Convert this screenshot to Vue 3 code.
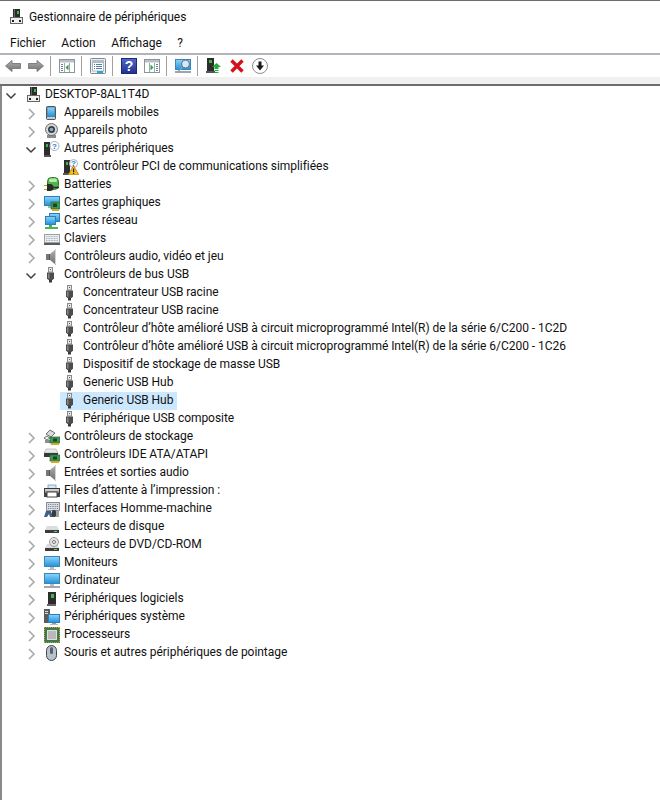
<script setup>
const menus = ['Fichier', 'Action', 'Affichage', '?']
const tools = ['back', 'fwd', '|', 't-hide', '|', 't-props', '|', 't-help', 't-panel', '|', 't-scan', '|', 't-update', 't-x', 't-down']
const rows = [
  { l: 0, t: 'DESKTOP-8AL1T4D', i: 'root', s: 'open' },
  { l: 1, t: 'Appareils mobiles', i: 'mobile', s: 'closed' },
  { l: 1, t: 'Appareils photo', i: 'camera', s: 'closed' },
  { l: 1, t: 'Autres périphériques', i: 'other', s: 'open' },
  { l: 2, t: 'Contrôleur PCI de communications simplifiées', i: 'warn' },
  { l: 1, t: 'Batteries', i: 'battery', s: 'closed' },
  { l: 1, t: 'Cartes graphiques', i: 'gpu', s: 'closed' },
  { l: 1, t: 'Cartes réseau', i: 'net', s: 'closed' },
  { l: 1, t: 'Claviers', i: 'keyboard', s: 'closed' },
  { l: 1, t: 'Contrôleurs audio, vidéo et jeu', i: 'audio', s: 'closed' },
  { l: 1, t: 'Contrôleurs de bus USB', i: 'usb', s: 'open' },
  { l: 2, t: 'Concentrateur USB racine', i: 'usb' },
  { l: 2, t: 'Concentrateur USB racine', i: 'usb' },
  { l: 2, t: 'Contrôleur d’hôte amélioré USB à circuit microprogrammé Intel(R) de la série 6/C200 - 1C2D', i: 'usb' },
  { l: 2, t: 'Contrôleur d’hôte amélioré USB à circuit microprogrammé Intel(R) de la série 6/C200 - 1C26', i: 'usb' },
  { l: 2, t: 'Dispositif de stockage de masse USB', i: 'usb' },
  { l: 2, t: 'Generic USB Hub', i: 'usb' },
  { l: 2, t: 'Generic USB Hub', i: 'usb', sel: true },
  { l: 2, t: 'Périphérique USB composite', i: 'usb' },
  { l: 1, t: 'Contrôleurs de stockage', i: 'storage', s: 'closed' },
  { l: 1, t: 'Contrôleurs IDE ATA/ATAPI', i: 'ide', s: 'closed' },
  { l: 1, t: 'Entrées et sorties audio', i: 'audio', s: 'closed' },
  { l: 1, t: 'Files d’attente à l’impression :', i: 'print', s: 'closed' },
  { l: 1, t: 'Interfaces Homme-machine', i: 'hid', s: 'closed' },
  { l: 1, t: 'Lecteurs de disque', i: 'disk', s: 'closed' },
  { l: 1, t: 'Lecteurs de DVD/CD-ROM', i: 'dvd', s: 'closed' },
  { l: 1, t: 'Moniteurs', i: 'monitor', s: 'closed' },
  { l: 1, t: 'Ordinateur', i: 'computer', s: 'closed' },
  { l: 1, t: 'Périphériques logiciels', i: 'soft', s: 'closed' },
  { l: 1, t: 'Périphériques système', i: 'sys', s: 'closed' },
  { l: 1, t: 'Processeurs', i: 'cpu', s: 'closed' },
  { l: 1, t: 'Souris et autres périphériques de pointage', i: 'mouse', s: 'closed' },
]
</script>

<template>
  <div class="win">
    <svg class="defs" aria-hidden="true">
      <defs>
        <linearGradient id="blue" x1="0" y1="0" x2="0" y2="1"><stop offset="0" stop-color="#8fd4f7"/><stop offset="1" stop-color="#1f93de"/></linearGradient>
        <linearGradient id="grayg" x1="0" y1="0" x2="0" y2="1"><stop offset="0" stop-color="#b0b0b0"/><stop offset="1" stop-color="#6e6e6e"/></linearGradient>
        <linearGradient id="help" x1="0" y1="0" x2="0" y2="1"><stop offset="0" stop-color="#5468c8"/><stop offset="1" stop-color="#1f2f8f"/></linearGradient>
      </defs>
      <symbol id="root" viewBox="0 0 16 16">
        <rect x="4" y="0" width="7" height="8" fill="#2b2b2b"/><rect x="8" y="2" width="2" height="3" fill="#3fb54a"/><rect x="5" y="0" width="1" height="8" fill="#666"/>
        <rect x="1.500" y="8.500" width="12" height="6" fill="#efefef" stroke="#666"/><rect x="3" y="11" width="2" height="2" fill="#222"/><rect x="10" y="11" width="2" height="2" fill="#222"/>
      </symbol>
      <symbol id="mobile" viewBox="0 0 16 16">
        <rect x="2.500" y="1.500" width="9" height="13" rx="1" fill="#6f7a84" stroke="#4d5761"/><rect x="3.500" y="2.500" width="7" height="9" fill="url(#blue)"/><rect x="3" y="12" width="8" height="2" fill="#c8ccd0"/>
      </symbol>
      <symbol id="camera" viewBox="0 0 16 16">
        <rect x="3" y="12" width="9" height="3" fill="#8c8c8c"/><rect x="6" y="10" width="3" height="3" fill="#666"/>
        <circle cx="7.500" cy="6.500" r="6" fill="#d6d6d6" stroke="#6e6e6e"/><circle cx="7.500" cy="6.500" r="3.500" fill="#3a3f44"/><circle cx="7.500" cy="6.500" r="1.800" fill="#7bb0d6"/>
      </symbol>
      <symbol id="other" viewBox="0 0 16 16">
        <rect x="0" y="1" width="6" height="13" fill="#2d2d2d"/><rect x="2" y="3" width="2" height="3" fill="#3fb54a"/><rect x="0" y="14" width="7" height="2" fill="#555"/>
        <circle cx="10.500" cy="5" r="4.500" fill="#fff" stroke="#9fb0c2"/>
      </symbol>
      <symbol id="warn" viewBox="0 0 16 16">
        <rect x="1" y="1" width="6" height="13" fill="#2d2d2d"/><rect x="3" y="3" width="2" height="3" fill="#3fb54a"/><rect x="0" y="14" width="8" height="2" fill="#555"/>
        <circle cx="10.500" cy="4.500" r="4" fill="#fff" stroke="#a9b4c0"/>
        <path d="M10.500 6.500L16 16H5z" fill="#f4b91f" stroke="#8a6a10" stroke-width=".6"/><rect x="10" y="9.500" width="1.200" height="3.500" fill="#222"/><rect x="10" y="13.700" width="1.200" height="1.200" fill="#222"/>
      </symbol>
      <symbol id="battery" viewBox="0 0 16 16">
        <rect x="3.500" y="0.500" width="11" height="12" rx="4" fill="#4fb648" stroke="#2c7a2c"/><rect x="5" y="1.500" width="8" height="3.500" rx="1.500" fill="#b5e8ac"/>
        <path d="M0 8.500h3M0 12.500h3" stroke="#c9a11e" stroke-width="1.200"/><path d="M3 7h3a3.500 3.500 0 010 7H3z" fill="#2a2a2a"/><path d="M9 10.500h6" stroke="#2a2a2a" stroke-width="1.500"/>
      </symbol>
      <symbol id="gpu" viewBox="0 0 16 16">
        <rect x="0.500" y="1.500" width="15" height="9" fill="url(#blue)" stroke="#2c7fb8"/><rect x="4" y="11" width="4" height="2" fill="#b0b0b0"/>
        <rect x="7" y="7" width="9" height="7" fill="#3f9a55" stroke="#1f6b36" stroke-width=".7"/><rect x="9" y="8.500" width="4" height="3.500" fill="#1d4426"/><rect x="8" y="14" width="7" height="2" fill="#d6a826"/>
      </symbol>
      <symbol id="net" viewBox="0 0 16 16">
        <rect x="5.500" y="0.500" width="10" height="8" fill="url(#blue)" stroke="#2c7fb8"/><rect x="1.500" y="3.500" width="10" height="8" fill="url(#blue)" stroke="#2c7fb8"/>
        <rect x="5" y="12" width="3" height="2" fill="#3fb54a"/><rect x="1" y="14" width="13" height="2" fill="#47b552"/>
      </symbol>
      <symbol id="keyboard" viewBox="0 0 16 16">
        <rect x="0.500" y="3.500" width="15" height="8" fill="#eceff2" stroke="#9aa1a9"/><path d="M2 5.500h12M2 7.500h12M2 9.500h12" stroke="#a9b0b8" stroke-dasharray="1 .6"/><rect x="0" y="12" width="16" height="2" fill="#5c5c5c"/>
      </symbol>
      <symbol id="audio" viewBox="0 0 16 16">
        <rect x="2" y="5" width="4" height="6" fill="#777"/><path d="M6 5L12 0V16L6 11z" fill="url(#grayg)"/><path d="M11.500 0.500V15.500" stroke="#d5d5d5"/><rect x="5" y="5" width="1" height="6" fill="#555"/>
      </symbol>
      <symbol id="usb" viewBox="0 0 16 16">
        <rect x="4.500" y="0.500" width="4" height="4.500" fill="#e7e7e7" stroke="#8a8a8a"/><rect x="6" y="2" width="1" height="1" fill="#555"/>
        <path d="M3 5.500H10V11.500L8.500 13H4.500L3 11.500z" fill="#4d4d4d"/><rect x="4" y="6.500" width="1.500" height="5" fill="#888"/><rect x="5" y="13" width="3" height="2.500" fill="#3a3a3a"/>
      </symbol>
      <symbol id="storage" viewBox="0 0 16 16">
        <path d="M2 5L6 1L11 4L7 8z" fill="#d9d9d9" stroke="#555" stroke-width=".8"/><path d="M0 9L3 7L6 9L3 11z" fill="#eee" stroke="#555" stroke-width=".8"/>
        <rect x="1" y="11" width="6" height="3" fill="#8d8d8d"/><rect x="6" y="8" width="10" height="6" fill="#3f9a55" stroke="#1f6b36" stroke-width=".7"/><rect x="9" y="9.500" width="4" height="3" fill="#1d4426"/><rect x="7" y="14" width="8" height="2" fill="#d6a826"/>
      </symbol>
      <symbol id="ide" viewBox="0 0 16 16">
        <path d="M2 2H12L14 6H0z" fill="#e8e8e8" stroke="#999" stroke-width=".5"/><rect x="0" y="6" width="14" height="4" fill="#3a3a3a"/>
        <rect x="6" y="8" width="10" height="6" fill="#3f9a55" stroke="#1f6b36" stroke-width=".7"/><rect x="9" y="9.500" width="4" height="3" fill="#1d4426"/><rect x="7" y="14" width="8" height="2" fill="#d6a826"/>
      </symbol>
      <symbol id="print" viewBox="0 0 16 16">
        <rect x="4" y="2" width="8" height="4" fill="#d9eaf6" stroke="#5a8fb5" stroke-width=".7"/><rect x="0.500" y="5.500" width="15" height="5" fill="#8f8f8f" stroke="#3a3a3a"/>
        <rect x="1" y="6" width="14" height="2" fill="#cfcfcf"/><rect x="3" y="9" width="10" height="5" fill="#fff" stroke="#444"/><rect x="0" y="11" width="3" height="3" fill="#444"/><rect x="13" y="11" width="3" height="3" fill="#444"/>
      </symbol>
      <symbol id="hid" viewBox="0 0 16 16">
        <rect x="2.500" y="1.500" width="13" height="8" fill="#d8dde2" stroke="#8a9098"/><path d="M4 3.500h10M4 5.500h10M4 7.500h10" stroke="#7d8894" stroke-dasharray="1 .8"/>
        <path d="M2 10H7L9 16H6L5 13L3 16H0z" fill="#3f5f88"/><rect x="8" y="9" width="4" height="7" rx="1.500" fill="#3a3a3a"/><rect x="12" y="10" width="3" height="6" fill="#9aa5b0"/>
      </symbol>
      <symbol id="disk" viewBox="0 0 16 16">
        <path d="M3 7H13L15 11H1z" fill="#dcdcdc"/><rect x="1" y="11" width="14" height="3" fill="#3b3b3b"/><rect x="10" y="12" width="3" height="1" fill="#5bd06a"/>
      </symbol>
      <symbol id="dvd" viewBox="0 0 16 16">
        <path d="M3 7H13L15 11H1z" fill="#dcdcdc"/><rect x="1" y="11" width="14" height="3" fill="#3b3b3b"/><rect x="10" y="12" width="3" height="1" fill="#5bd06a"/>
        <circle cx="10" cy="5" r="4.500" fill="#e3e3e3" stroke="#9a9a9a"/><circle cx="10" cy="5" r="1.500" fill="#fff" stroke="#777"/>
      </symbol>
      <symbol id="monitor" viewBox="0 0 16 16">
        <rect x="0.500" y="1.500" width="15" height="10" fill="url(#blue)" stroke="#3a86b8"/><rect x="6" y="12" width="4" height="2" fill="#b8bcc0"/><rect x="4" y="14" width="8" height="1" fill="#b8bcc0"/>
      </symbol>
      <symbol id="computer" viewBox="0 0 16 16">
        <rect x="0.500" y="0.500" width="15" height="10" fill="url(#blue)" stroke="#3a86b8"/><rect x="6" y="11" width="4" height="2" fill="#b8bcc0"/><rect x="0" y="13" width="16" height="2" fill="#a4a8ac"/>
      </symbol>
      <symbol id="soft" viewBox="0 0 16 16">
        <rect x="4" y="1" width="8" height="12" fill="#2d2d2d"/><rect x="7" y="3" width="3" height="4" fill="#3fb54a"/><rect x="3" y="13" width="9" height="2" fill="#666"/>
      </symbol>
      <symbol id="sys" viewBox="0 0 16 16">
        <rect x="0" y="0" width="6" height="14" fill="#5c5c5c"/><rect x="1" y="2" width="3" height="1" fill="#ddd"/><rect x="1" y="4" width="3" height="1" fill="#ddd"/>
        <rect x="4.500" y="5.500" width="11" height="8" fill="url(#blue)" stroke="#2c7fb8"/><rect x="8" y="14" width="4" height="1" fill="#999"/><rect x="6" y="15" width="8" height="1" fill="#bbb"/>
      </symbol>
      <symbol id="cpu" viewBox="0 0 16 16">
        <rect x="0" y="0" width="16" height="16" fill="#3f7a4e"/><path d="M0 .5h16M0 15.500h16M.5 0v16M15.500 0v16" stroke="#c89f2c" stroke-dasharray="1 1"/><rect x="3" y="3" width="10" height="10" fill="#dedede"/><rect x="4" y="4" width="8" height="8" fill="#b9b9b9"/>
      </symbol>
      <symbol id="mouse" viewBox="0 0 16 16">
        <rect x="2.500" y="0.500" width="10" height="15" rx="5" fill="#b9c2ca" stroke="#3d4650"/><rect x="6" y="2" width="3" height="7" rx="1.500" fill="#56626e"/>
      </symbol>
      <symbol id="back" viewBox="0 0 16 16"><path d="M.5 8L7 2.500V5.500H15.500V10.500H7V13.500z" fill="url(#grayg)" stroke="#808080"/></symbol>
      <symbol id="fwd" viewBox="0 0 16 16"><path d="M15.500 8L9 2.500V5.500H.5V10.500H9V13.500z" fill="url(#grayg)" stroke="#808080"/></symbol>
      <symbol id="t-hide" viewBox="0 0 16 16">
        <rect x="0.500" y="1.500" width="15" height="13" fill="#fff" stroke="#8c949c"/><rect x="1" y="2" width="14" height="2.500" fill="#b9c0c7"/><path d="M5.500 5v9M10.500 5v9" stroke="#a0a8b0"/><path d="M2 6.500h2M2 8.500h2M2 10.500h2M2 12.500h2" stroke="#6a7f95"/><path d="M9.500 6.500V12.500L6.500 9.500z" fill="#29a23f"/>
      </symbol>
      <symbol id="t-props" viewBox="0 0 16 16">
        <rect x="0.500" y="0.500" width="15" height="15" rx="1" fill="#eef1f4" stroke="#7f878f"/><rect x="2" y="2" width="12" height="2" fill="#b4bcc4"/><rect x="2.500" y="4.500" width="11" height="8.500" fill="#fff" stroke="#b0b7be"/><path d="M4 6.500h1M6 6.500h6M4 8.500h1M6 8.500h6M4 10.500h1M6 10.500h6" stroke="#5b7fa3"/><rect x="7" y="13" width="6" height="2" fill="#29a7e1"/>
      </symbol>
      <symbol id="t-help" viewBox="0 0 16 16">
        <rect x="0.500" y="0.500" width="15" height="15" fill="url(#help)" stroke="#1a2a78"/>
      </symbol>
      <symbol id="t-panel" viewBox="0 0 16 16">
        <rect x="0.500" y="1.500" width="15" height="13" fill="#fff" stroke="#8c949c"/><rect x="1" y="2" width="14" height="2.500" fill="#b9c0c7"/><path d="M5.500 5v9M10.500 5v9" stroke="#a0a8b0"/><path d="M12 6.500h2M12 8.500h2M12 10.500h2M12 12.500h2" stroke="#6a7f95"/><path d="M6.500 6.500V12.500L9.500 9.500z" fill="#29a23f"/>
      </symbol>
      <symbol id="t-scan" viewBox="0 0 16 16">
        <rect x="0.500" y="1.500" width="15" height="10" fill="url(#blue)" stroke="#3a86b8"/><rect x="0" y="13" width="16" height="2" fill="#9aa7b2"/>
        <circle cx="10.500" cy="6" r="4" fill="#cfeaf9" stroke="#5f6f7d"/><path d="M7.500 9L3.500 13" stroke="#8a97a3" stroke-width="1.500"/>
      </symbol>
      <symbol id="t-update" viewBox="0 0 16 16">
        <rect x="1" y="0" width="7" height="13" fill="#2d2d2d"/><rect x="3" y="2" width="3" height="3" fill="#3fb54a"/><rect x="0" y="13" width="9" height="2" fill="#555"/>
        <path d="M6 9L10.500 5L15 9H12.500V11H8.500V9z" fill="#1fae3a"/><rect x="8.500" y="12" width="4" height="1" fill="#1fae3a"/><rect x="8.500" y="14" width="4" height="1" fill="#1fae3a"/>
      </symbol>
      <symbol id="t-x" viewBox="0 0 16 16"><path d="M2.500 2.500L13.500 13.500M13.500 2.500L2.500 13.500" stroke="#d5121b" stroke-width="3.400"/></symbol>
      <symbol id="t-down" viewBox="0 0 16 16">
        <circle cx="8" cy="8" r="7.500" fill="#fff" stroke="#8e8e8e"/><path d="M6.500 3.500H9.500V7.500H12L8 12.500L4 7.500H6.500z" fill="#1a1a1a"/>
      </symbol>
    </svg>

    <header class="title">
      <svg class="title-icon"><use href="#root"/></svg>
      <span>Gestionnaire de périphériques</span>
    </header>

    <nav class="menu">
      <span v-for="m in menus" :key="m">{{ m }}</span>
    </nav>

    <div class="toolbar">
      <template v-for="(b, n) in tools" :key="n">
        <span v-if="b === '|'" class="sep"></span>
        <span v-else class="tool">
          <svg class="ico" viewBox="0 0 16 16">
            <use :href="'#' + b" width="16" height="16"/>
            <text v-if="b === 't-help'" x="8" y="13" class="mark-help">?</text>
          </svg>
        </span>
      </template>
    </div>
    <div class="band"></div>

    <main class="tree">
      <div v-for="(r, n) in rows" :key="n" class="row" :class="'lvl' + r.l">
        <span class="twist">
          <svg v-if="r.s === 'open'" width="12" height="12" viewBox="0 0 12 12"><path d="M1.500 3.500L6 8L10.500 3.500" fill="none" stroke="#404040" stroke-width="1.500"/></svg>
          <svg v-else-if="r.s === 'closed'" width="12" height="12" viewBox="0 0 12 12"><path d="M4 1L9 6L4 11" fill="none" stroke="#a6a6a6" stroke-width="1.500"/></svg>
        </span>
        <div class="item" :class="{ sel: r.sel }">
          <svg class="ico" viewBox="0 0 16 16">
            <use :href="'#' + r.i" width="16" height="16"/>
            <text v-if="r.i === 'other'" x="10.500" y="8" class="mark">?</text>
            <text v-if="r.i === 'warn'" x="10.500" y="7" class="mark">?</text>
          </svg>
          <span class="label">{{ r.t }}</span>
        </div>
      </div>
    </main>
  </div>
</template>

<style scoped>
.win {
  width: 660px;
  height: 800px;
  display: flex;
  flex-direction: column;
  background: #fff;
  color: #111;
  font-family: Roboto, "Noto Sans", sans-serif;
  font-size: 12px;
  overflow: hidden;
  box-sizing: border-box;
  border-top: 1px solid #6d6d6d;
}
.defs { display: block; width: 0; height: 0; }
.ico { width: 16px; height: 16px; display: block; flex: none; }
.mark { font: 700 8px "Liberation Sans", sans-serif; text-anchor: middle; fill: #2e7cc6; }
.mark-help { font: 700 14px "Liberation Sans", sans-serif; text-anchor: middle; fill: #fff; }
.title {
  height: 31px;
  display: flex;
  align-items: center;
  gap: 4px;
  padding-left: 9px;
  letter-spacing: -0.07px;
}
.title-icon { width: 16px; height: 16px; display: block; }
.menu {
  height: 21px;
  display: flex;
  align-items: center;
  gap: 15.500px;
  padding-left: 10px;
  border-bottom: 2px solid #b4b4bc;
  flex: none;
}
.toolbar {
  height: 22px;
  display: flex;
  align-items: center;
  padding-left: 1px;
  flex: none;
}
.tool { width: 23px; display: flex; justify-content: center; }
.sep { width: 1px; height: 20px; background: #a0a0a0; margin: 0 4.500px 0 2.500px; }
.band { height: 7px; background: #f0f0f0; border-bottom: 2px solid #6d6d6d; flex: none; }
.tree { flex: 1; border-left: 2px solid #8a8a8a; }
.row { height: 18px; display: flex; align-items: center; }
.twist { width: 12px; height: 12px; display: block; flex: none; margin: 2px 7px 0 23px; }
.lvl0 .twist { margin: 2px 9px 0 3px; }
.lvl0 .ico { margin-right: 1px; }
.lvl1 .ico { margin-right: 2px; }
.lvl2 .twist { margin: 2px 4px 0 42px; }
.item { height: 18px; display: flex; align-items: center; }
.lvl2 .item { padding: 0 2px 0 3px; }
.lvl2 .ico { margin-right: 2px; }
.label { padding: 0 2px 2px; line-height: 16px; white-space: nowrap; letter-spacing: -0.045px; }
.sel { background: #cce8ff; }
</style>
